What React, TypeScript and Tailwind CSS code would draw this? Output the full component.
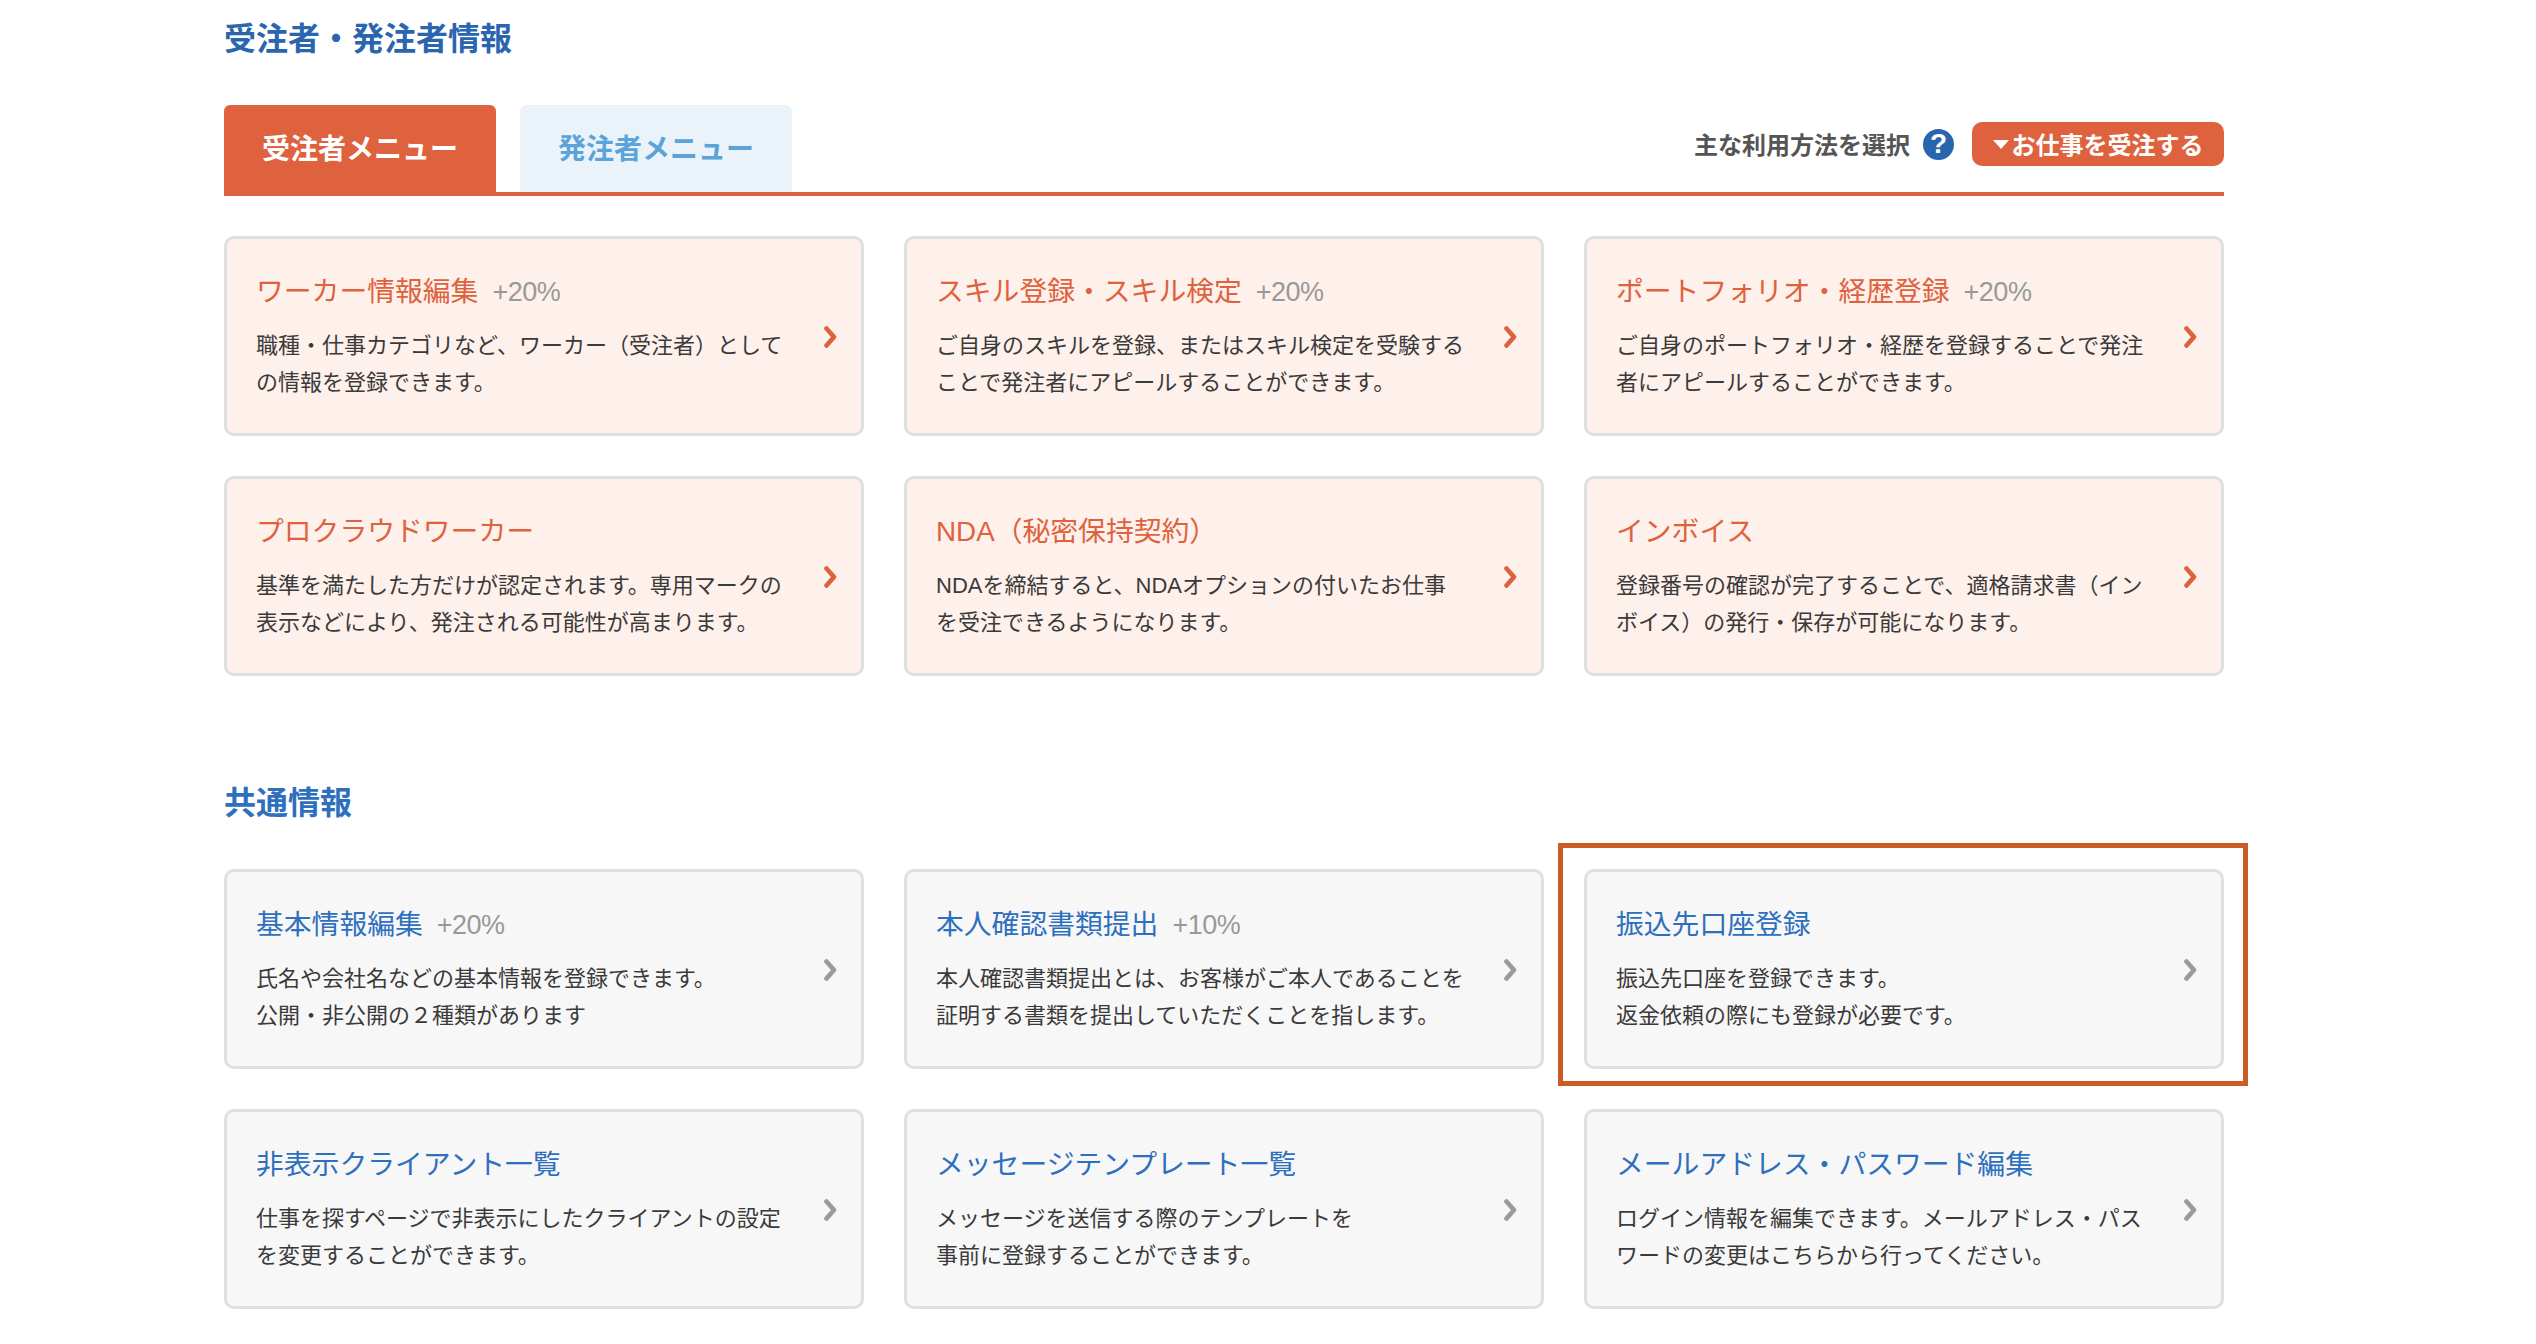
type Item = { title: string; bonus?: string; lines: string[] }

const workerItems: Item[] = [
  { title: 'ワーカー情報編集', bonus: '+20%', lines: ['職種・仕事カテゴリなど、ワーカー（受注者）として', 'の情報を登録できます。'] },
  { title: 'スキル登録・スキル検定', bonus: '+20%', lines: ['ご自身のスキルを登録、またはスキル検定を受験する', 'ことで発注者にアピールすることができます。'] },
  { title: 'ポートフォリオ・経歴登録', bonus: '+20%', lines: ['ご自身のポートフォリオ・経歴を登録することで発注', '者にアピールすることができます。'] },
  { title: 'プロクラウドワーカー', lines: ['基準を満たした方だけが認定されます。専用マークの', '表示などにより、発注される可能性が高まります。'] },
  { title: 'NDA（秘密保持契約）', lines: ['NDAを締結すると、NDAオプションの付いたお仕事', 'を受注できるようになります。'] },
  { title: 'インボイス', lines: ['登録番号の確認が完了することで、適格請求書（イン', 'ボイス）の発行・保存が可能になります。'] },
]

const commonItems: Item[] = [
  { title: '基本情報編集', bonus: '+20%', lines: ['氏名や会社名などの基本情報を登録できます。', '公開・非公開の２種類があります'] },
  { title: '本人確認書類提出', bonus: '+10%', lines: ['本人確認書類提出とは、お客様がご本人であることを', '証明する書類を提出していただくことを指します。'] },
  { title: '振込先口座登録', lines: ['振込先口座を登録できます。', '返金依頼の際にも登録が必要です。'] },
  { title: '非表示クライアント一覧', lines: ['仕事を探すページで非表示にしたクライアントの設定', 'を変更することができます。'] },
  { title: 'メッセージテンプレート一覧', lines: ['メッセージを送信する際のテンプレートを', '事前に登録することができます。'] },
  { title: 'メールアドレス・パスワード編集', lines: ['ログイン情報を編集できます。メールアドレス・パス', 'ワードの変更はこちらから行ってください。'] },
]

function Chevron({ className }: { className: string }) {
  return (
    <svg viewBox="0 0 14 22" className={`w-[14px] h-[22px] shrink-0 mt-[2px] ${className}`} aria-hidden="true">
      <path d="M3.5 2.5l7.5 8.5-7.5 8.5" fill="none" stroke="currentColor" strokeWidth="4.6" strokeLinecap="round" strokeLinejoin="round" />
    </svg>
  )
}

function Card({ item, tone }: { item: Item; tone: 'orange' | 'gray' }) {
  const orange = tone === 'orange'
  return (
    <a className={`relative h-[200px] rounded-[10px] border-[3px] border-[#dfdfdf] pl-[29px] pr-[24px] flex items-center justify-between ${orange ? 'bg-[#fef0ea]' : 'bg-[#f7f7f7]'}`}>
      <div className="w-[540px] mt-[1px]">
        <div className="flex items-baseline h-[40px] whitespace-nowrap">
          <span className={`text-[27.8px] leading-[40px] ${orange ? 'text-[#de623d]' : 'text-[#2e6fbe]'}`}>{item.title}</span>
          {item.bonus && (
            <span className="ml-[14px] text-[27px] leading-[40px] tracking-[-0.5px] text-[#999999]">{item.bonus}</span>
          )}
        </div>
        <div className="mt-[16px] text-[22px] leading-[36.5px] text-[#3a3a3a] whitespace-nowrap">
          {item.lines.map((line) => (
            <div key={line}>{line}</div>
          ))}
        </div>
      </div>
      <Chevron className={orange ? 'text-[#de623d]' : 'text-[#9a9a9a]'} />
    </a>
  )
}

export default function App() {
  return (
    <div className="relative w-[2536px] h-[1344px] overflow-hidden bg-white font-['Liberation_Sans','Noto_Sans_CJK_JP',sans-serif]">
      <div className="ml-[224px] w-[2000px]">
        <h2 className="pt-[17px] text-[32px] leading-[44px] font-bold text-[#2a65b0]">受注者・発注者情報</h2>

        {/* Tabs */}
        <div className="mt-[44px] h-[91px] flex items-start border-b-[4px] border-[#de623d]">
          <div className="w-[272px] h-[91px] rounded-t-[6px] bg-[#de623d] text-white text-[28px] font-bold flex items-center justify-center pb-[1px]">
            受注者メニュー
          </div>
          <div className="ml-[24px] w-[272px] h-[87px] rounded-t-[6px] bg-[#eaf3fa] text-[#5ba3d9] text-[28px] font-bold flex items-center justify-center pt-[3px]">
            発注者メニュー
          </div>
          <div className="ml-auto h-[87px] flex items-center gap-[13px] pb-[9px]">
            <span className="mt-[4px] text-[24px] font-bold text-[#555555]">主な利用方法を選択</span>
            <span className="w-[31px] h-[31px] rounded-full bg-[#2a65b0] text-white text-[28px] leading-none font-bold flex items-center justify-center">?</span>
            <button className="ml-[5px] w-[252px] h-[44px] rounded-[10px] bg-[#de623d] text-white text-[24px] font-bold flex items-center justify-center gap-[3px] pt-[3px]">
              <span className="w-0 h-0 -mt-[3px] border-x-[8px] border-x-transparent border-t-[9px] border-t-white" />
              お仕事を受注する
            </button>
          </div>
        </div>

        <div className="mt-[40px] grid grid-cols-3 gap-x-[40px] gap-y-[40px]">
          {workerItems.map((item) => (
            <Card key={item.title} item={item} tone="orange" />
          ))}
        </div>

        <h2 className="mt-[105px] text-[32px] leading-[44px] font-bold text-[#2e6fbe]">共通情報</h2>

        <div className="mt-[44px] grid grid-cols-3 gap-x-[40px] gap-y-[40px]">
          {commonItems.map((item) => (
            <Card key={item.title} item={item} tone="gray" />
          ))}
        </div>
      </div>

      {/* annotation box over the bank account card */}
      <div className="absolute left-[1558px] top-[843px] w-[690px] h-[243px] border-[5px] border-[#cb5c25]" />
    </div>
  )
}
